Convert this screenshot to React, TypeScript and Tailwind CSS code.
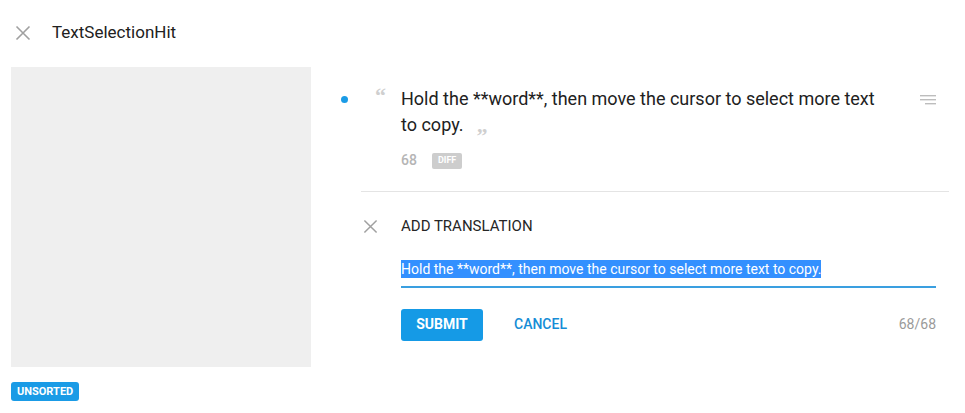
import React from 'react';

const CloseIcon = ({ className }: { className?: string }) => (
  <svg viewBox="0 0 16 16" className={className} fill="none" stroke="currentColor" strokeWidth={1.6}>
    <path d="M1.5 1.5 L14.5 14.5 M14.5 1.5 L1.5 14.5" />
  </svg>
);

const LinesIcon = () => (
  <svg viewBox="0 0 16 10" className="w-[16px] h-[10px] text-[#bdbdbd]" fill="currentColor">
    <rect x="0" y="0" width="16" height="1.4" />
    <rect x="0" y="4" width="16" height="1.4" />
    <rect x="5" y="8" width="11" height="1.4" />
  </svg>
);

export default function App() {
  const source = 'Hold the **word**, then move the cursor to select more text to copy.';

  return (
    <div className="w-[965px] h-[413px] bg-white overflow-hidden font-['Roboto',sans-serif] text-[#212121]">
      {/* Header */}
      <div className="flex items-center h-[67px] pl-[15px] pb-[2px]">
        <CloseIcon className="w-[16px] h-[16px] text-[#a0a0a0]" />
        <span className="ml-[21px] text-[17px] leading-none">TextSelectionHit</span>
      </div>

      <div className="flex">
        {/* Left column */}
        <div className="pl-[11px] w-[311px] shrink-0">
          <div className="w-[300px] h-[300px] bg-[#efefef]" />
          <div className="mt-[15px] flex">
            <div className="flex items-center h-[19px] px-[6px] rounded-[3px] bg-[#1a9be6] text-white text-[11px] font-bold leading-none">
              UNSORTED
            </div>
          </div>
        </div>

        {/* Right column */}
        <div className="flex-1 pl-[30px] pr-[16px] pt-[19px]">
          <div className="flex items-start">
            <div className="w-[34px] shrink-0 pt-[10px]">
              <div className="w-[7px] h-[7px] rounded-full bg-[#1a9be6]" />
            </div>
            <div className="w-[26px] shrink-0 h-[20px] text-[22px] leading-[20px] font-bold text-[#cfcfcf] font-['Liberation_Serif',serif]">
              “
            </div>
            <div className="w-[492px] shrink-0">
              <p className="text-[18px] leading-[26px] text-[#212121]">
                {source}
                <span className="relative top-[14px] inline-block align-top mt-[4px] ml-[13px] h-[12px] text-[22px] leading-[12px] font-bold text-[#cfcfcf] font-['Liberation_Serif',serif]">”</span>
              </p>
              <div className="flex items-center mt-[12px]">
                <span className="text-[14px] font-medium text-[#b5b5b5]">68</span>
                <span className="ml-[15px] flex items-center h-[16px] px-[6px] rounded-[2px] bg-[#cdcdcd] text-white text-[9px] font-bold leading-none">
                  DIFF
                </span>
              </div>
            </div>
            <div className="flex-1" />
            <div className="pt-[9px] pr-[13px]">
              <LinesIcon />
            </div>
          </div>

          <div className="ml-[20px] mt-[20px] h-px bg-[#e4e4e4]" />

          {/* Translation */}
          <div className="flex items-center mt-[23px] ml-[22px]">
            <CloseIcon className="w-[15px] h-[15px] text-[#a0a0a0]" />
            <span className="ml-[23px] text-[15px] text-[#262626]">ADD TRANSLATION</span>
          </div>

          <div className="ml-[60px] mr-[13px] mt-[22px]">
            <div className="pb-[8px] border-b-2 border-[#3a9fe0] text-[14px] leading-[18px]">
              <span className="bg-[#3390ff] text-white py-[1px]">{source}</span>
            </div>
            <div className="flex items-center mt-[21px]">
              <button className="w-[82px] h-[32px] rounded-[3px] bg-[#159ae6] text-white text-[14px] font-bold">
                SUBMIT
              </button>
              <button className="ml-[31px] text-[14px] font-medium text-[#168dd6]">CANCEL</button>
              <div className="flex-1" />
              <span className="text-[14px] text-[#9a9a9a]">68/68</span>
            </div>
          </div>
        </div>
      </div>
    </div>
  );
}
